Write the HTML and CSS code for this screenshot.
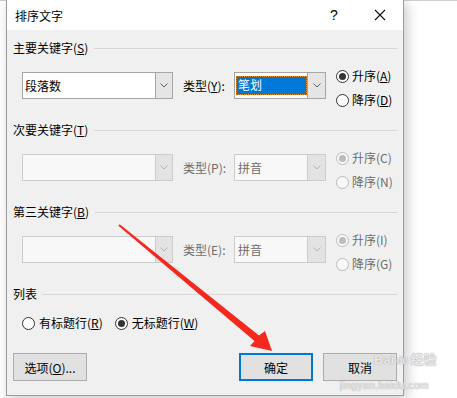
FILE: index.html
```html
<!DOCTYPE html>
<html lang="zh-CN">
<head>
    <meta charset="UTF-8">
    <title>排序文字</title>
    <link rel="stylesheet" href="styles.css">
</head>
<body>
    <div class="dialog">
        <div class="titlebar">
            <span class="title">排序文字</span>
            <span class="help">?</span>
            <span class="close">
                <svg width="12" height="12" viewBox="0 0 12 12"><path d="M1 1 L11 11 M11 1 L1 11" stroke="#111" stroke-width="1.1" fill="none"/></svg>
            </span>
        </div>

        <div class="content">
            <div class="group-title"><span>主要关键字(<u>S</u>)</span></div>
            <div class="key-row">
                <div class="combo key">
                    <span class="value">段落数</span>
                    <span class="drop"><svg width="8" height="5" viewBox="0 0 8 5"><path d="M0.5 0.5 L4 4 L7.5 0.5" stroke="#606060" fill="none"/></svg></span>
                </div>
                <span class="type-label">类型(<u>Y</u>):</span>
                <div class="combo type">
                    <span class="value selected">笔划</span>
                    <span class="drop"><svg width="8" height="5" viewBox="0 0 8 5"><path d="M0.5 0.5 L4 4 L7.5 0.5" stroke="#606060" fill="none"/></svg></span>
                </div>
                <div class="order">
                    <label class="radio"><span class="dot checked"></span><span>升序(<u>A</u>)</span></label>
                    <label class="radio"><span class="dot"></span><span>降序(<u>D</u>)</span></label>
                </div>
            </div>

            <div class="group-title"><span>次要关键字(<u>T</u>)</span></div>
            <div class="key-row">
                <div class="combo key off">
                    <span class="value"></span>
                    <span class="drop"><svg width="8" height="5" viewBox="0 0 8 5"><path d="M0.5 0.5 L4 4 L7.5 0.5" stroke="#b4b4b4" fill="none"/></svg></span>
                </div>
                <span class="type-label off">类型(P):</span>
                <div class="combo type off">
                    <span class="value">拼音</span>
                    <span class="drop"><svg width="8" height="5" viewBox="0 0 8 5"><path d="M0.5 0.5 L4 4 L7.5 0.5" stroke="#b4b4b4" fill="none"/></svg></span>
                </div>
                <div class="order off">
                    <label class="radio"><span class="dot checked"></span><span>升序(C)</span></label>
                    <label class="radio"><span class="dot"></span><span>降序(N)</span></label>
                </div>
            </div>

            <div class="group-title"><span>第三关键字(<u>B</u>)</span></div>
            <div class="key-row">
                <div class="combo key off">
                    <span class="value"></span>
                    <span class="drop"><svg width="8" height="5" viewBox="0 0 8 5"><path d="M0.5 0.5 L4 4 L7.5 0.5" stroke="#b4b4b4" fill="none"/></svg></span>
                </div>
                <span class="type-label off">类型(E):</span>
                <div class="combo type off">
                    <span class="value">拼音</span>
                    <span class="drop"><svg width="8" height="5" viewBox="0 0 8 5"><path d="M0.5 0.5 L4 4 L7.5 0.5" stroke="#b4b4b4" fill="none"/></svg></span>
                </div>
                <div class="order off">
                    <label class="radio"><span class="dot checked"></span><span>升序(I)</span></label>
                    <label class="radio"><span class="dot"></span><span>降序(G)</span></label>
                </div>
            </div>

            <div class="group-title list-title"><span>列表</span></div>
            <div class="list-row">
                <label class="radio"><span class="dot"></span><span>有标题行(<u>R</u>)</span></label>
                <label class="radio"><span class="dot checked"></span><span>无标题行(<u>W</u>)</span></label>
            </div>

            <div class="buttons">
                <button class="btn">选项(<u>O</u>)...</button>
                <div class="right">
                    <button class="btn default">确定</button>
                    <button class="btn">取消</button>
                </div>
            </div>
        </div>
    </div>

    <svg class="arrow" width="457" height="398" viewBox="0 0 457 398">
        <polygon points="119.6,224.2 259,335.4 265,331 272,351 250,346 254.5,341 118.4,225.8" fill="#f5281e"/>
    </svg>

    <div class="watermark">
        <div class="wm-logo">Bai<span class="wm-paw">du</span>经验</div>
    </div>
    <div class="wm-url">jingyan.baidu.com</div>
</body>
</html>
```

FILE: styles.css
```css
body {
    margin: 0;
    height: 398px;
    overflow: hidden;
    position: relative;
    background: linear-gradient(#cfcfcf, #cfcfcf) no-repeat 0 0 / 100% 1px, #fff;
    font-family: "Noto Sans CJK SC", "Microsoft YaHei", sans-serif;
    font-size: 12px;
    color: #000;
}

u {
    text-decoration: underline;
    text-underline-offset: 1px;
}

.dialog {
    margin-left: 6px;
    width: 396px;
    background: #f0f0f0;
    border: 1px solid #9b9b9b;
    border-top: none;
    box-shadow: 3px 3px 12px rgba(0, 0, 0, 0.22);
}

.titlebar {
    height: 30px;
    background: #fff;
    display: flex;
    align-items: center;
    padding-left: 8px;
}

.title {
    flex: 1;
}

.help, .close {
    width: 46px;
    height: 30px;
    display: flex;
    align-items: center;
    justify-content: center;
}

.help {
    font-family: "Liberation Sans", sans-serif;
    font-size: 14px;
}

.content {
    padding: 10px 6px 14px;
}

.group-title {
    display: flex;
    align-items: center;
    height: 16px;
    line-height: 16px;
}

.group-title::after {
    content: "";
    flex: 1;
    margin-left: 6px;
    border-top: 1px solid #d7d7d7;
}

.list-title::after {
    margin-left: 5px;
}

.key-row {
    display: flex;
    align-items: flex-start;
    height: 40px;
    margin: 12px 0 14px 9px;
}

.combo {
    display: flex;
    box-sizing: border-box;
    height: 27px;
    margin-top: 4px;
    border: 1px solid #a6a6a6;
    background: #fff;
}

.combo.key {
    width: 151px;
}

.combo.type {
    width: 92px;
}

.value {
    flex: 1;
    padding-left: 2px;
    line-height: 25px;
    white-space: nowrap;
}

.type .value {
    padding-left: 3px;
}

.value.selected {
    margin: 3px 0 3px 1px;
    padding-left: 2px;
    line-height: 17px;
    background: #0078d7;
    color: #fff;
    outline: 1px dotted #f08a24;
    outline-offset: -1px;
}

.drop {
    width: 16px;
    display: flex;
    align-items: center;
    justify-content: center;
    border-left: 1px solid #a6a6a6;
    background: #e5e5e5;
}

.type .drop {
    width: 17px;
}

.type-label {
    width: 51px;
    margin: 4px 0 0 10px;
    line-height: 27px;
    white-space: nowrap;
}

.order {
    margin-left: 10px;
    display: flex;
    flex-direction: column;
    gap: 8px;
}

.radio {
    display: flex;
    align-items: center;
    gap: 3px;
    height: 16px;
    line-height: 16px;
    white-space: nowrap;
}

.dot {
    position: relative;
    width: 13px;
    height: 13px;
    box-sizing: border-box;
    border: 1px solid #333;
    border-radius: 50%;
    background: #fff;
}

.dot.checked::after {
    content: "";
    position: absolute;
    inset: 2px;
    border-radius: 50%;
    background: #333;
}

.off {
    color: #6d6d6d;
}

.combo.off {
    border-color: #cccccc;
    background: #f8f8f8;
}

.combo.off .drop {
    border-left-color: #cccccc;
    background: #e3e3e3;
}

.order.off .dot {
    border-color: #bcbcbc;
    background: #f8f8f8;
}

.order.off .dot.checked::after {
    background: #bcbcbc;
}

.list-row {
    display: flex;
    gap: 12px;
    margin: 13px 0 0 9px;
}

.list-row .radio {
    gap: 4px;
}

.buttons {
    display: flex;
    justify-content: space-between;
    margin-top: 22px;
}

.right {
    display: flex;
    gap: 10px;
}

.btn {
    width: 74px;
    height: 28px;
    box-sizing: border-box;
    padding: 0;
    border: 1px solid #adadad;
    background: #e1e1e1;
    font: inherit;
    color: #000;
}

.btn.default {
    border: 2px solid #0078d7;
}

.arrow {
    position: absolute;
    left: 0;
    top: 0;
    pointer-events: none;
}

.watermark, .wm-url {
    position: absolute;
    color: rgba(255, 255, 255, 0.75);
    text-shadow: 0 0 1px #a8a8a8, 0 0 1px #a8a8a8;
    pointer-events: none;
}

.watermark {
    left: 374px;
    top: 352px;
}

.wm-logo {
    font-family: "Liberation Sans", "Noto Sans CJK SC", sans-serif;
    font-size: 13px;
    font-weight: bold;
    line-height: 16px;
    white-space: nowrap;
}

.wm-paw {
    display: inline-block;
    margin: 0 2px;
    font-size: 10px;
}

.wm-url {
    left: 340px;
    top: 380px;
    font-family: "Liberation Sans", sans-serif;
    font-size: 10px;
    letter-spacing: 0.5px;
    line-height: 12px;
}
```
